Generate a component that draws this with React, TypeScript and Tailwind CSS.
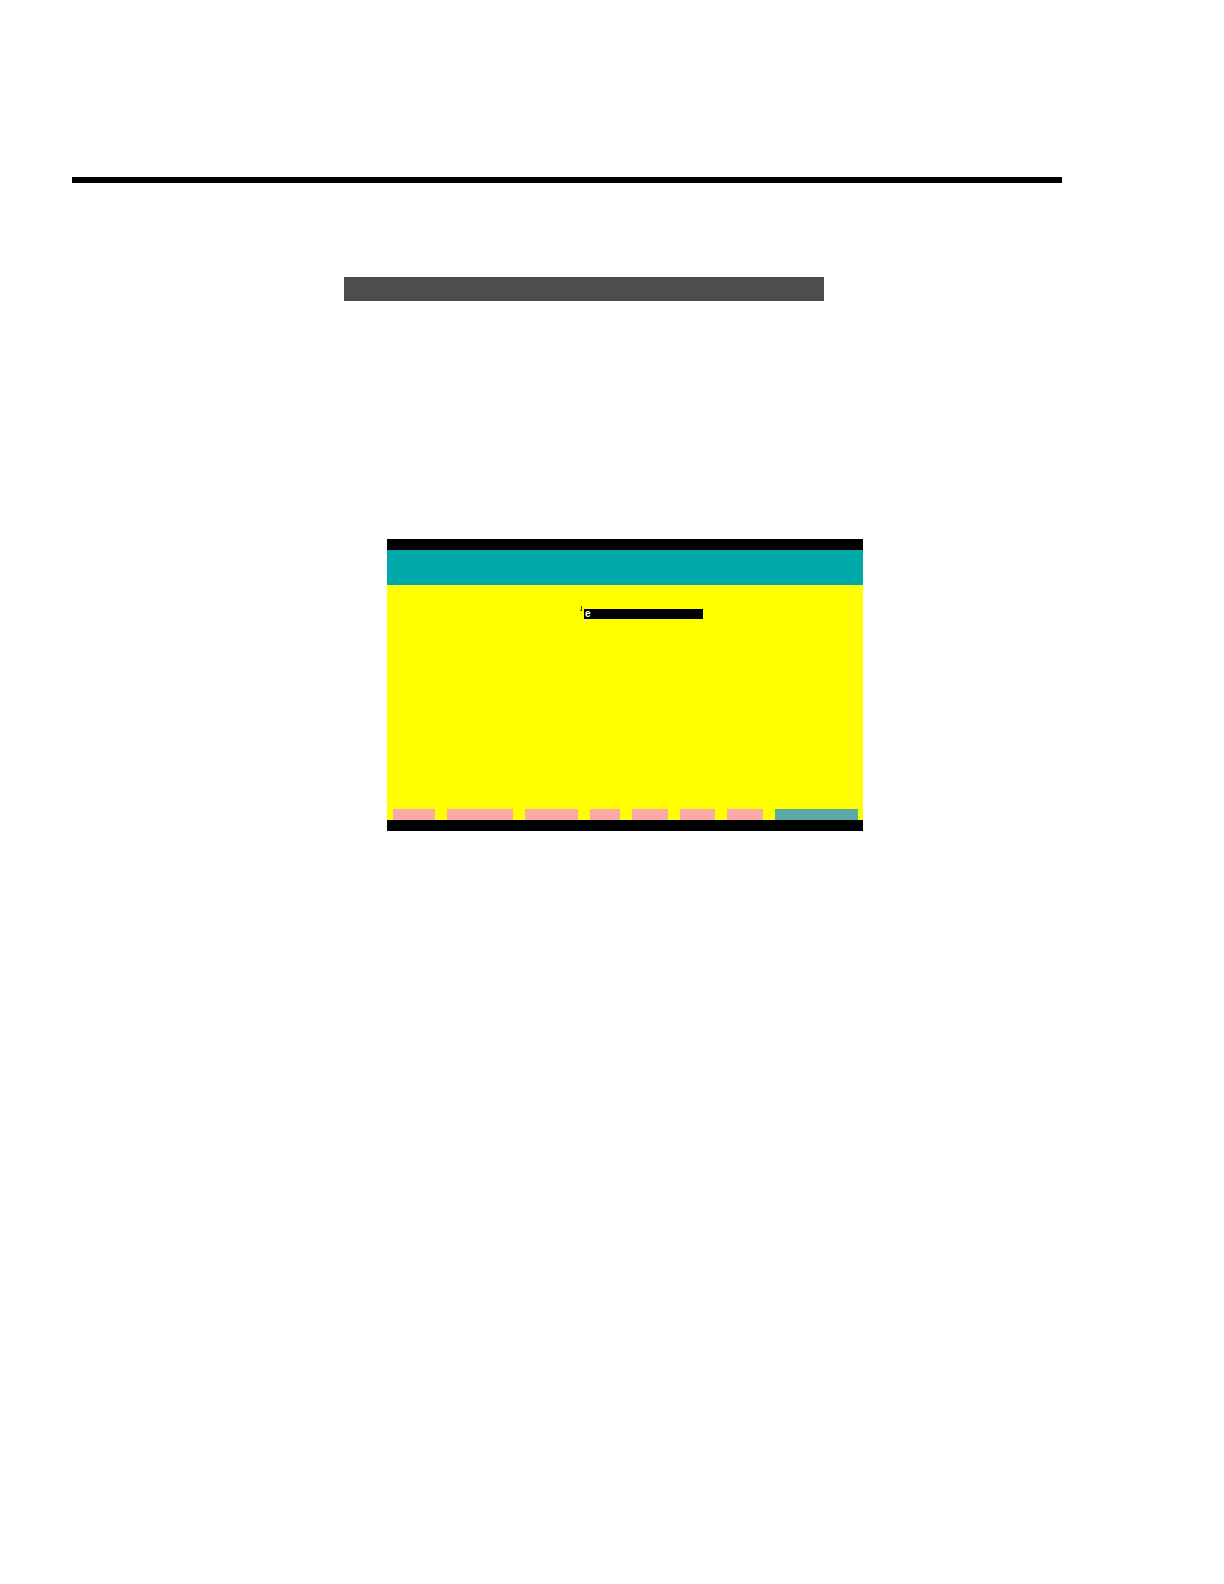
import React from "react";

const buttons = [
  { w: 42, teal: false },
  { w: 66, teal: false },
  { w: 53, teal: false },
  { w: 30, teal: false },
  { w: 36, teal: false },
  { w: 35, teal: false },
  { w: 36, teal: false },
  { w: 83, teal: true },
];

export default function App() {
  return (
    <div className="min-h-[1584px] w-[1224px] bg-white pt-[177px] font-['Liberation_Sans',Arial,sans-serif]">
      {/* header rule */}
      <div className="ml-[72px] h-[6px] w-[990px] bg-black" />

      {/* title bar */}
      <div className="ml-[344px] mt-[94px] h-[24px] w-[480px] bg-[#4d4d4d]" />

      {/* terminal panel */}
      <div className="ml-[387px] mt-[238px] w-[476px]">
        <div className="h-[11px] bg-black" />
        <div className="h-[35px] bg-[#00a9a9]" />
        <div className="flex h-[235px] flex-col justify-between bg-[#ffff00]">
          <div className="flex items-start pl-[193px] pt-[21px]">
            <div className="mr-[2px] flex flex-col items-center">
              <div className="h-[4px] w-[1px] bg-[#555500]" />
              <div className="h-[1px] w-[2px] bg-[#555500]" />
            </div>
            <div className="mt-[3px] flex h-[10px] w-[119px] items-center bg-black pl-[1px] text-[10px] font-bold leading-none text-white">
              e
            </div>
          </div>
          <div className="flex gap-[12px] pl-[6px]">
            {buttons.map((b, i) => (
              <div
                key={i}
                className={`h-[11px] ${b.teal ? "bg-[#5aa9a9]" : "bg-[#fba8a8]"}`}
                style={{ width: b.w }}
              />
            ))}
          </div>
        </div>
        <div className="h-[11px] bg-black" />
      </div>
    </div>
  );
}
